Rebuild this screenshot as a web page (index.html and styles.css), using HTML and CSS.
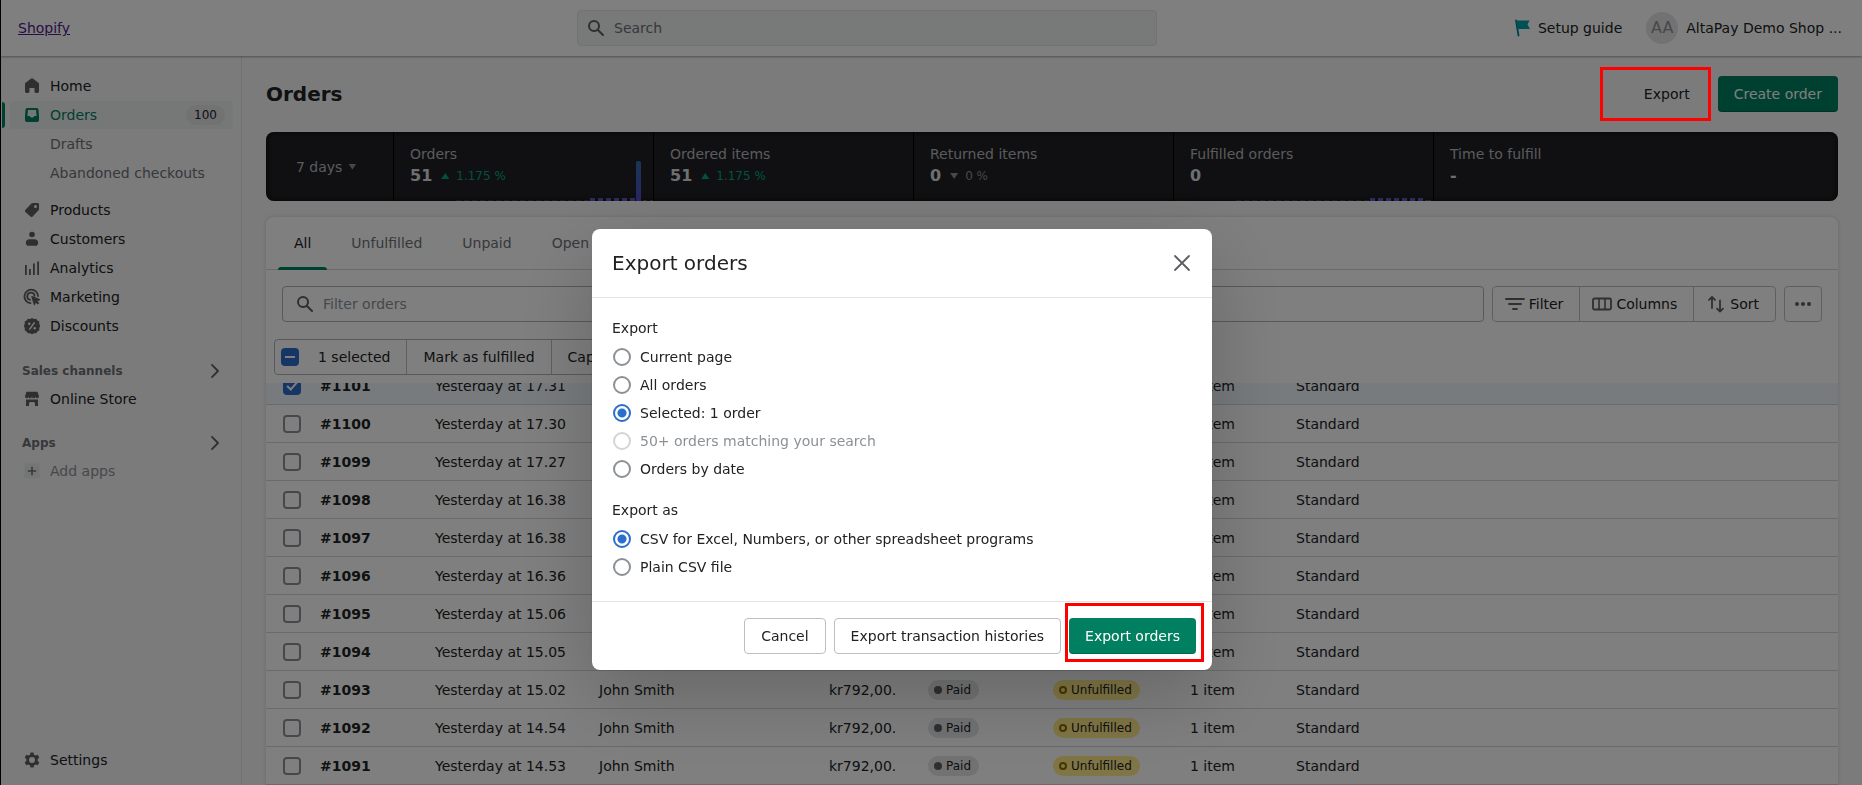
FILE: index.html
```html
<!DOCTYPE html>
<html lang="en">
<head>
<meta charset="utf-8">
<title>Orders</title>
<link rel="stylesheet" href="styles.css">
</head>
<body>
<svg class="sprite" aria-hidden="true">
  <symbol id="i-search" viewBox="0 0 20 20"><path d="M8 12a4 4 0 1 1 0-8 4 4 0 0 1 0 8zm9.707 4.293-4.82-4.82A5.968 5.968 0 0 0 14 8 6 6 0 0 0 2 8a6 6 0 0 0 6 6 5.968 5.968 0 0 0 3.473-1.113l4.82 4.82a.997.997 0 0 0 1.414 0 .999.999 0 0 0 0-1.414z"/></symbol>
  <symbol id="i-chevron" viewBox="0 0 20 20"><path d="M7 3.800 13 10l-6 6.200" fill="none" stroke="currentColor" stroke-width="1.800" stroke-linecap="round" stroke-linejoin="round"/></symbol>
</svg>
<div class="app">
  <header class="topbar">
    <a class="logo" href="#">Shopify</a>
    <label class="search">
      <svg class="icon"><use href="#i-search"/></svg>
      <input type="search" placeholder="Search" aria-label="Search">
    </label>
    <div class="account">
      <a class="guide" href="#guide">
        <svg class="flag" viewBox="0 0 16 18"><path d="M2 1.500 4.500 16.500" stroke="#00848e" stroke-width="1.800" stroke-linecap="round"/><path d="M2 1.500h13.500l-2 4 2.500 4.500H4z" fill="#00a0ac"/></svg>
        Setup guide
      </a>
      <button class="user" type="button"><span class="avatar">AA</span>AltaPay Demo Shop ...</button>
    </div>
  </header>
  <div class="columns">
    <nav class="sidebar">
      <ul class="nav">
        <li><a href="#home"><svg class="icon" viewBox="0 0 20 20"><path d="M17 8v7.600c0 .8-.6 1.400-1.400 1.400h-1.700c-.8 0-1.400-.6-1.400-1.400V12h-5v3.600c0 .8-.6 1.400-1.400 1.400H4.400C3.600 17 3 16.400 3 15.600V8c0-.5.200-.9.600-1.200l5.600-4.300c.5-.3 1.100-.3 1.600 0l5.600 4.300c.4.300.6.700.6 1.200z"/></svg>Home</a></li>
        <li class="active"><a href="#orders"><svg class="icon" viewBox="0 0 20 20"><path fill-rule="evenodd" d="M5.500 3h9c1 0 1.800.7 2 1.700L17 11v4.300c0 1-.8 1.700-1.700 1.700H4.700C3.800 17 3 16.300 3 15.300V11l.5-6.300c.2-1 1-1.700 2-1.700zM6 5l-.6 6h1.800c.6 0 .8.600 1.200 1.100.3.300.6.500 1 .5h1.200c.4 0 .7-.2 1-.5.4-.5.6-1.100 1.200-1.100h1.800L14 5z"/></svg>Orders<span class="count">100</span></a></li>
        <li class="sub"><a href="#drafts">Drafts</a></li>
        <li class="sub"><a href="#checkouts">Abandoned checkouts</a></li>
      </ul>
      <ul class="nav">
        <li><a href="#products"><svg class="icon" viewBox="0 0 20 20"><path fill-rule="evenodd" d="M11 3h4.700c.7 0 1.300.6 1.300 1.300V9c0 .5-.2 1-.5 1.300l-5.800 6.200c-.7.7-1.600.7-2.300.1l-5-4.700c-.6-.7-.6-1.600.1-2.200l5.900-6.100C9.900 3.200 10.400 3 11 3zm2.500 2a1.500 1.500 0 1 0 0 3 1.500 1.500 0 0 0 0-3z"/></svg>Products</a></li>
        <li><a href="#customers"><svg class="icon" viewBox="0 0 20 20"><circle cx="10" cy="5.500" r="2.800"/><path d="M7.500 10.200h5c2.200 0 3.700 1.400 3.700 3.500 0 1.900-1.200 3.100-2.700 3.100h-7c-1.500 0-2.700-1.200-2.700-3.100 0-2.100 1.500-3.500 3.700-3.500z"/></svg>Customers</a></li>
        <li><a href="#analytics"><svg class="icon" viewBox="0 0 20 20"><path d="M3 7h1.800v10H3zM7 11h1.800v6H7zM11 5.500h1.800V17H11zM15.200 3.500H17V17h-1.800z"/></svg>Analytics</a></li>
        <li><a href="#marketing"><svg class="icon" viewBox="0 0 20 20"><g fill="none" stroke="currentColor" stroke-width="1.800" stroke-linecap="round"><path d="M16 9a6.800 6.800 0 1 0-7.500 7.200"/><path d="M12.600 8.800a3.700 3.700 0 1 0-4.500 4.100"/></g><path d="M9.300 9.800c-.2-.6.200-1 .8-.8l7.600 2.900c.7.300.7 1.100 0 1.400l-2.200.9 1.800 1.800-1.600 1.600-1.800-1.800-.9 2c-.3.600-1 .6-1.200-.1z"/></svg>Marketing</a></li>
        <li><a href="#discounts"><svg class="icon" viewBox="0 0 20 20"><path d="m10 2 2 1 2.200-.2 1.200 1.800 1.900 1-.1 2.200 1 2.200-1 2 .1 2.200-1.900 1.200-1.200 1.900-2.200-.1-2 1-2-1-2.200.1-1.200-1.900-1.900-1.200.1-2.200-1-2 1-2.200-.1-2.200 1.900-1 1.200-1.800L8 3z"/><path d="m7.800 13.200 4.400-6.400" stroke="#f6f6f7" stroke-width="1.500" stroke-linecap="round"/><circle cx="7.300" cy="7.800" r="1.200" fill="#f6f6f7"/><circle cx="12.700" cy="12.200" r="1.200" fill="#f6f6f7"/></svg>Discounts</a></li>
      </ul>
      <h2 class="section"><a href="#channels">Sales channels<svg class="icon"><use href="#i-chevron"/></svg></a></h2>
      <ul class="nav">
        <li><a href="#store"><svg class="icon" viewBox="0 0 20 20"><path d="M4.500 2.800h11L17 7.300c0 1.100-.8 2-1.800 2-.9 0-1.700-.8-1.700-1.800 0 1-.8 1.800-1.800 1.800S10 8.500 10 7.500c0 1-.8 1.800-1.800 1.800S6.500 8.500 6.500 7.500c0 1-.8 1.800-1.700 1.800-1 0-1.800-.9-1.800-2z"/><path d="M4 10.500h12V17h-3v-2.500a1.500 1.500 0 0 0-1.500-1.500h-3A1.500 1.500 0 0 0 7 14.500V17H4z"/></svg>Online Store</a></li>
      </ul>
      <h2 class="section"><a href="#apps">Apps<svg class="icon"><use href="#i-chevron"/></svg></a></h2>
      <ul class="nav">
        <li class="muted"><a href="#add"><svg class="icon" viewBox="0 0 20 20"><rect x="2.500" y="2.500" width="15" height="15" rx="2" fill="#e9eaeb"/><path d="M10 5.800v8.400M5.800 10h8.400" stroke="#6d7175" stroke-width="1.600"/></svg>Add apps</a></li>
      </ul>
      <ul class="nav settings">
        <li><a href="#settings"><svg class="icon" viewBox="0 0 20 20"><path fill-rule="evenodd" d="M8.500 2h3l.5 2.200 1.500.9 2.200-.8 1.600 2.600L15.700 8.500v1.900l1.600 1.600-1.600 2.700-2.200-.7-1.500.9-.5 2.200h-3L8 14.900 6.500 14l-2.200.7L2.700 12l1.600-1.600V8.500L2.700 6.900l1.600-2.600 2.200.8L8 4.200zM10 6.500a3 3 0 1 0 0 6 3 3 0 0 0 0-6z" transform="translate(0 .5)"/></svg>Settings</a></li>
      </ul>
    </nav>
    <main class="main">
      <div class="heading">
        <h1>Orders</h1>
        <div class="heading-actions">
          <button class="btn plain marked" type="button">Export<span class="marker"></span></button>
          <button class="btn primary" type="button">Create order</button>
        </div>
      </div>
      <section class="metrics">
        <button class="period" type="button">7 days<span class="down"></span></button>
        <div class="metric"><h3>Orders</h3><p><b>51</b><span class="up"></span><small class="good">1.175 %</small></p>
          <svg class="spark" width="200" height="42" viewBox="0 0 200 42"><defs><linearGradient id="bar" x1="0" y1="0" x2="0" y2="1"><stop offset="0" stop-color="#2f6fae"/><stop offset="1" stop-color="#5548c8"/></linearGradient></defs><path d="M3 41.500h133" stroke="#34345a" stroke-width="1" stroke-dasharray="5 3"/><path d="M137 40.500h47" stroke="#5a54c0" stroke-width="3" stroke-dasharray="5 3"/><path d="M190 41.500h10" stroke="#4a4a60" stroke-width="1" stroke-dasharray="4 3"/><rect x="183" y="2" width="5" height="43" rx="2" fill="url(#bar)"/></svg></div>
        <div class="metric"><h3>Ordered items</h3><p><b>51</b><span class="up"></span><small class="good">1.175 %</small></p></div>
        <div class="metric"><h3>Returned items</h3><p><b>0</b><span class="down"></span><small>0 %</small></p></div>
        <div class="metric"><h3>Fulfilled orders</h3><p><b>0</b></p>
          <svg class="spark" width="200" height="42" viewBox="0 0 200 42"><path d="M3 41.500h133" stroke="#34345a" stroke-width="1" stroke-dasharray="5 3"/><path d="M137 40.500h53" stroke="#5a54c0" stroke-width="3" stroke-dasharray="5 3"/><path d="M192 41.500h6" stroke="#4a4a60" stroke-width="1"/></svg></div>
        <div class="metric"><h3>Time to fulfill</h3><p><b>-</b></p></div>
      </section>
      <section class="card">
        <div class="tabs" role="tablist">
          <button class="tab current" role="tab" aria-selected="true" type="button">All</button>
          <button class="tab" role="tab" type="button">Unfulfilled</button>
          <button class="tab" role="tab" type="button">Unpaid</button>
          <button class="tab" role="tab" type="button">Open</button>
        </div>
        <div class="filters">
          <label class="filter-box"><svg class="icon"><use href="#i-search"/></svg><input type="text" placeholder="Filter orders" aria-label="Filter orders"></label>
          <div class="group">
            <button type="button"><svg class="icon" viewBox="0 0 20 20"><path d="M1 5h18M4 10h12M8 15h4" stroke="currentColor" stroke-width="1.800" stroke-linecap="round"/></svg>Filter</button>
            <button type="button"><svg class="icon" viewBox="0 0 20 20"><rect x="1" y="4.500" width="18" height="11" rx="1.500" fill="none" stroke="currentColor" stroke-width="1.800"/><path d="M7 4.500v11M13 4.500v11" stroke="currentColor" stroke-width="1.600"/></svg>Columns</button>
            <button type="button"><svg class="icon" viewBox="0 0 20 20"><path d="M6 14V3M3 5.800 6 3l3 2.800M14 6.500v11M11 14.700l3 2.800 3-2.800" fill="none" stroke="currentColor" stroke-width="1.800" stroke-linecap="round" stroke-linejoin="round"/></svg>Sort</button>
          </div>
          <button class="more" type="button" aria-label="More actions"><svg class="icon" viewBox="0 0 20 20"><circle cx="4" cy="10" r="2"/><circle cx="10" cy="10" r="2"/><circle cx="16" cy="10" r="2"/></svg></button>
        </div>
        <div class="bulk">
          <label class="bulk-select"><input class="check mixed" type="checkbox" checked>1 selected</label>
          <button type="button">Mark as fulfilled</button>
          <button type="button">Capture payments</button>
        </div>
        <div class="table-clip">
          <table class="orders">
            <colgroup><col class="c-check"><col class="c-id"><col class="c-date"><col class="c-name"><col class="c-total"><col class="c-paid"><col class="c-state"><col class="c-items"><col></colgroup>
            <tbody>
              <tr class="selected"><td><input class="check" type="checkbox" checked aria-label="#1101"></td><th scope="row">#1101</th><td>Yesterday at 17.31</td><td>John Smith</td><td>kr792,00.</td><td><span class="badge">Paid</span></td><td><span class="badge warn">Unfulfilled</span></td><td>1 item</td><td>Standard</td></tr>
              <tr><td><input class="check" type="checkbox" aria-label="#1100"></td><th scope="row">#1100</th><td>Yesterday at 17.30</td><td>John Smith</td><td>kr792,00.</td><td><span class="badge">Paid</span></td><td><span class="badge warn">Unfulfilled</span></td><td>1 item</td><td>Standard</td></tr>
              <tr><td><input class="check" type="checkbox" aria-label="#1099"></td><th scope="row">#1099</th><td>Yesterday at 17.27</td><td>John Smith</td><td>kr792,00.</td><td><span class="badge">Paid</span></td><td><span class="badge warn">Unfulfilled</span></td><td>1 item</td><td>Standard</td></tr>
              <tr><td><input class="check" type="checkbox" aria-label="#1098"></td><th scope="row">#1098</th><td>Yesterday at 16.38</td><td>John Smith</td><td>kr792,00.</td><td><span class="badge">Paid</span></td><td><span class="badge warn">Unfulfilled</span></td><td>1 item</td><td>Standard</td></tr>
              <tr><td><input class="check" type="checkbox" aria-label="#1097"></td><th scope="row">#1097</th><td>Yesterday at 16.38</td><td>John Smith</td><td>kr792,00.</td><td><span class="badge">Paid</span></td><td><span class="badge warn">Unfulfilled</span></td><td>1 item</td><td>Standard</td></tr>
              <tr><td><input class="check" type="checkbox" aria-label="#1096"></td><th scope="row">#1096</th><td>Yesterday at 16.36</td><td>John Smith</td><td>kr792,00.</td><td><span class="badge">Paid</span></td><td><span class="badge warn">Unfulfilled</span></td><td>1 item</td><td>Standard</td></tr>
              <tr><td><input class="check" type="checkbox" aria-label="#1095"></td><th scope="row">#1095</th><td>Yesterday at 15.06</td><td>John Smith</td><td>kr792,00.</td><td><span class="badge">Paid</span></td><td><span class="badge warn">Unfulfilled</span></td><td>1 item</td><td>Standard</td></tr>
              <tr><td><input class="check" type="checkbox" aria-label="#1094"></td><th scope="row">#1094</th><td>Yesterday at 15.05</td><td>John Smith</td><td>kr792,00.</td><td><span class="badge">Paid</span></td><td><span class="badge warn">Unfulfilled</span></td><td>1 item</td><td>Standard</td></tr>
              <tr><td><input class="check" type="checkbox" aria-label="#1093"></td><th scope="row">#1093</th><td>Yesterday at 15.02</td><td>John Smith</td><td>kr792,00.</td><td><span class="badge">Paid</span></td><td><span class="badge warn">Unfulfilled</span></td><td>1 item</td><td>Standard</td></tr>
              <tr><td><input class="check" type="checkbox" aria-label="#1092"></td><th scope="row">#1092</th><td>Yesterday at 14.54</td><td>John Smith</td><td>kr792,00.</td><td><span class="badge">Paid</span></td><td><span class="badge warn">Unfulfilled</span></td><td>1 item</td><td>Standard</td></tr>
              <tr><td><input class="check" type="checkbox" aria-label="#1091"></td><th scope="row">#1091</th><td>Yesterday at 14.53</td><td>John Smith</td><td>kr792,00.</td><td><span class="badge">Paid</span></td><td><span class="badge warn">Unfulfilled</span></td><td>1 item</td><td>Standard</td></tr>
            </tbody>
          </table>
        </div>
      </section>
    </main>
  </div>
</div>
<div class="backdrop">
  <form class="modal" role="dialog" aria-labelledby="modal-title">
    <div class="modal-head">
      <h2 id="modal-title">Export orders</h2>
      <button class="close" type="button" aria-label="Close"><svg class="icon" viewBox="0 0 20 20"><path d="m3 3 14 14M17 3 3 17" stroke="currentColor" stroke-width="1.800" stroke-linecap="round"/></svg></button>
    </div>
    <div class="modal-body">
      <fieldset>
        <legend>Export</legend>
        <label><input type="radio" name="scope">Current page</label>
        <label><input type="radio" name="scope">All orders</label>
        <label><input type="radio" name="scope" checked>Selected: 1 order</label>
        <label class="off"><input type="radio" name="scope" disabled>50+ orders matching your search</label>
        <label><input type="radio" name="scope">Orders by date</label>
      </fieldset>
      <fieldset>
        <legend>Export as</legend>
        <label><input type="radio" name="format" checked>CSV for Excel, Numbers, or other spreadsheet programs</label>
        <label><input type="radio" name="format">Plain CSV file</label>
      </fieldset>
    </div>
    <div class="modal-foot">
      <button class="btn outline" type="button">Cancel</button>
      <button class="btn outline" type="button">Export transaction histories</button>
      <button class="btn primary marked" type="button">Export orders<span class="marker"></span></button>
    </div>
  </form>
</div>
</body>
</html>
```
FILE: styles.css
```css
*, *::before, *::after { box-sizing: border-box; }
body {
  margin: 0;
  font-family: "DejaVu Sans", sans-serif;
  font-size: 14px;
  line-height: 20px;
  color: #202223;
  background: #f6f6f7;
}
button, input { font: inherit; color: inherit; }
button { margin: 0; padding: 0; border: 0; background: none; white-space: nowrap; }
input::placeholder { color: #8c9196; opacity: 1; }
a { color: inherit; text-decoration: none; }
h1, h2, h3, p, ul { margin: 0; padding: 0; }
ul { list-style: none; }
.sprite { display: none; }
.icon { width: 20px; height: 20px; flex: none; fill: currentColor; color: #5c5f62; }

.app {
  display: flex;
  flex-direction: column;
  height: 100vh;
  overflow: hidden;
  border-left: 1px solid #000;
}

/* top bar */
.topbar {
  display: grid;
  grid-template-columns: 559px minmax(0, 580px) 1fr;
  align-items: center;
  flex: none;
  height: 56px;
  padding: 0 20px 0 17px;
  background: #fff;
  box-shadow: 0 1px 2px rgba(0, 0, 0, 0.35);
  z-index: 0;
}
.logo { color: #551a8b; text-decoration: underline; }
.search {
  display: flex;
  align-items: center;
  gap: 8px;
  height: 36px;
  padding: 0 8px;
  border: 1px solid #e4e5e7;
  border-radius: 4px;
  background: #f1f2f3;
}
.search input, .filter-box input {
  flex: 1;
  min-width: 0;
  padding: 0;
  border: 0;
  outline: 0;
  background: none;
}
.search input::placeholder { color: #6d7175; }
.account { display: flex; justify-content: flex-end; align-items: center; gap: 24px; }
.guide { display: flex; align-items: center; gap: 8px; }
.flag { width: 16px; height: 18px; fill: none; }
.user { display: flex; align-items: center; gap: 8px; }
.avatar {
  width: 32px;
  height: 32px;
  border-radius: 50%;
  background: #e4e5e7;
  color: #8c9196;
  font-size: 16px;
  line-height: 32px;
  text-align: center;
}

.columns { display: flex; flex: 1; min-height: 0; }

/* sidebar */
.sidebar {
  display: flex;
  flex-direction: column;
  flex: none;
  width: 241px;
  padding: 16px 8px 11px 9px;
  border-right: 1px solid #e1e3e5;
}
.nav { display: grid; gap: 1px; margin-bottom: 9px; }
.nav li { position: relative; }
.nav a {
  display: flex;
  align-items: center;
  gap: 8px;
  height: 28px;
  padding: 0 8px 0 12px;
  border-radius: 4px;
}
.nav .sub a { padding-left: 40px; color: #6d7175; }
.nav .muted a { color: #8c9196; }
.nav .active a { background: #edeeef; color: #008060; }
.nav .active .icon { color: #008060; }
.nav .active::before {
  content: "";
  position: absolute;
  top: 1px;
  bottom: 1px;
  left: -8px;
  width: 3px;
  border-radius: 0 4px 4px 0;
  background: #008060;
}
.count {
  margin-left: auto;
  padding: 0 8px;
  border-radius: 10px;
  background: #e4e5e7;
  color: #202223;
  font-size: 12px;
}
.section { margin-top: 10px; font-size: 12px; color: #6d7175; }
.section a {
  display: flex;
  justify-content: space-between;
  align-items: center;
  height: 24px;
  padding: 0 8px 0 12px;
}
.section + .nav { margin: 2px 0 8px; }
.nav.settings { margin: auto 0 0; }

/* page */
.main { flex: 1; min-width: 0; padding: 20px 24px 0; }
.heading { display: flex; justify-content: space-between; align-items: center; margin-bottom: 20px; }
.heading h1 { font-size: 20px; line-height: 28px; }
.heading-actions { display: flex; gap: 12px; }
.btn { height: 36px; padding: 0 16px; border-radius: 4px; }
.btn.primary {
  background: #008060;
  color: #fff;
  box-shadow: inset 0 -1px 0 rgba(0, 0, 0, 0.2);
}
.btn.outline { border: 1px solid #babfc3; background: #fff; }
.marked { position: relative; }
.marker { position: absolute; z-index: 20; border: 3px solid #f00; }
.heading .marker { inset: -9px -5px -9px -28px; }
.modal .marker { inset: -15px -8px -8px -4px; }

.metrics {
  display: grid;
  grid-template-columns: 127px repeat(4, minmax(0, 260fr)) minmax(0, 405fr);
  height: 69px;
  margin-bottom: 16px;
  border-radius: 8px;
  overflow: hidden;
  background: #202124;
  box-shadow: inset 0 0 6px rgba(0, 0, 0, 0.8);
  color: #dcdee0;
}
.period { display: flex; align-items: center; gap: 6px; padding-left: 30px; color: #b4b7ba; }
.down, .up { flex: none; width: 8px; height: 6px; background: #8c9196; }
.down { clip-path: polygon(0 0, 100% 0, 50% 100%); }
.up { background: #00a47c; clip-path: polygon(0 100%, 100% 100%, 50% 0); }
.metric { position: relative; padding: 12px 16px; border-left: 1px solid #000; }
.metric h3 { font-size: 14px; font-weight: 400; color: #b4b7ba; }
.metric p { display: flex; align-items: center; gap: 7px; height: 24px; }
.metric b { font-size: 16px; }
.metric small { font-size: 12px; color: #8c9196; }
.metric small.good { color: #00a47c; }
.metric .up, .metric .down { margin-left: 2px; }
.spark { position: absolute; right: 0; bottom: 0; }

.card {
  border-radius: 8px 8px 0 0;
  background: #fff;
  box-shadow: 0 0 4px rgba(23, 24, 24, 0.15);
}
.tabs { display: flex; gap: 8px; height: 53px; padding: 0 12px; border-bottom: 1px solid #d2d5d8; }
.tab { position: relative; padding: 0 16px; color: #6d7175; }
.tab.current { color: #202223; }
.tab.current::after {
  content: "";
  position: absolute;
  right: 0;
  bottom: -1px;
  left: 0;
  height: 3px;
  border-radius: 3px 3px 0 0;
  background: #008060;
}
.filters { display: flex; gap: 8px; padding: 16px 16px 17px; }
.filter-box {
  display: flex;
  align-items: center;
  flex: 1;
  gap: 8px;
  height: 36px;
  padding: 0 12px;
  border: 1px solid #aeb4b9;
  border-radius: 4px;
}
.group { display: flex; border: 1px solid #babfc3; border-radius: 4px; }
.group button { display: flex; align-items: center; gap: 4px; padding: 0 16px 0 12px; }
.group button + button, .bulk button { border-left: 1px solid #babfc3; }
.more { width: 38px; height: 36px; border: 1px solid #babfc3; border-radius: 4px; }
.more .icon { display: block; margin: 0 auto; }
.bulk {
  display: inline-flex;
  height: 36px;
  margin: 0 0 8px 8px;
  border: 1px solid #aeb4b9;
  border-radius: 4px;
  vertical-align: top;
}
.bulk-select { display: flex; align-items: center; gap: 19px; padding: 0 16px 0 6px; }
.bulk button { padding: 0 16px; }

.check {
  display: block;
  position: relative;
  appearance: none;
  width: 18px;
  height: 18px;
  margin: 0;
  border: 2px solid #8c9196;
  border-radius: 4px;
  background: #fff;
}
.check:checked { border-color: #2c6ecb; background: #2c6ecb; }
.check:checked::before {
  content: "";
  position: absolute;
  top: 1px;
  left: 4px;
  width: 6px;
  height: 10px;
  border: solid #fff;
  border-width: 0 2px 2px 0;
  transform: rotate(42deg);
}
.check.mixed:checked::before {
  top: 6px;
  left: 2px;
  width: 10px;
  height: 2px;
  border: 0;
  background: #fff;
  transform: none;
}

/* the list is scrolled under the bulk actions */
.table-clip { overflow: hidden; }
.orders { width: 100%; margin-top: -16px; border-collapse: separate; border-spacing: 0; table-layout: fixed; }
.orders td, .orders th {
  height: 38px;
  padding: 0;
  border-bottom: 1px solid #d2d5d8;
  text-align: left;
  white-space: nowrap;
}
.orders td:first-child { padding-left: 17px; }
.orders .selected td, .orders .selected th { background: #f0f7fd; }
.c-check { width: 54px; }
.c-id { width: 115px; }
.c-date { width: 164px; }
.c-name { width: 230px; }
.c-total { width: 99px; }
.c-paid { width: 125px; }
.c-state { width: 137px; }
.c-items { width: 106px; }
.badge {
  display: inline-flex;
  align-items: center;
  gap: 4px;
  height: 20px;
  padding: 0 8px 0 6px;
  border-radius: 10px;
  background: #e4e5e7;
  font-size: 12px;
  vertical-align: middle;
}
.badge::before { content: ""; width: 8px; height: 8px; border-radius: 50%; background: #5c5f62; }
.badge.warn { background: #ffea8a; }
.badge.warn::before { border: 2px solid #916a00; background: none; }

/* dialog */
.backdrop {
  position: fixed;
  inset: 0;
  z-index: 10;
  display: flex;
  justify-content: center;
  align-items: flex-start;
  padding: 229px 58px 0 0;
  background: rgba(0, 0, 0, 0.5);
}
.modal {
  width: 620px;
  border-radius: 8px;
  background: #fff;
  box-shadow: 0 26px 80px rgba(0, 0, 0, 0.2), 0 0 1px rgba(0, 0, 0, 0.2);
}
.modal-head {
  display: flex;
  justify-content: space-between;
  align-items: center;
  padding: 20px;
  border-bottom: 1px solid #e1e3e5;
}
.modal-head h2 { font-size: 20px; font-weight: 400; line-height: 28px; }
.close .icon { display: block; }
.modal-body { padding: 20px 20px 24px; }
fieldset { display: grid; gap: 8px; margin: 0; padding: 0; border: 0; }
fieldset + fieldset { margin-top: 21px; }
legend { padding: 0; margin-bottom: 9px; }
fieldset label { display: flex; align-items: center; gap: 9px; padding-left: 1px; }
fieldset .off { color: #8c9196; }
fieldset input {
  appearance: none;
  width: 18px;
  height: 18px;
  margin: 0;
  border: 2px solid #8c9196;
  border-radius: 50%;
}
fieldset input:disabled { border-color: #d2d5d8; }
fieldset input:checked {
  border-color: #2c6ecb;
  background: radial-gradient(circle, #2c6ecb 4px, #fff 5px);
}
.modal-foot {
  display: flex;
  justify-content: flex-end;
  gap: 8px;
  padding: 16px;
  border-top: 1px solid #e1e3e5;
}
```
